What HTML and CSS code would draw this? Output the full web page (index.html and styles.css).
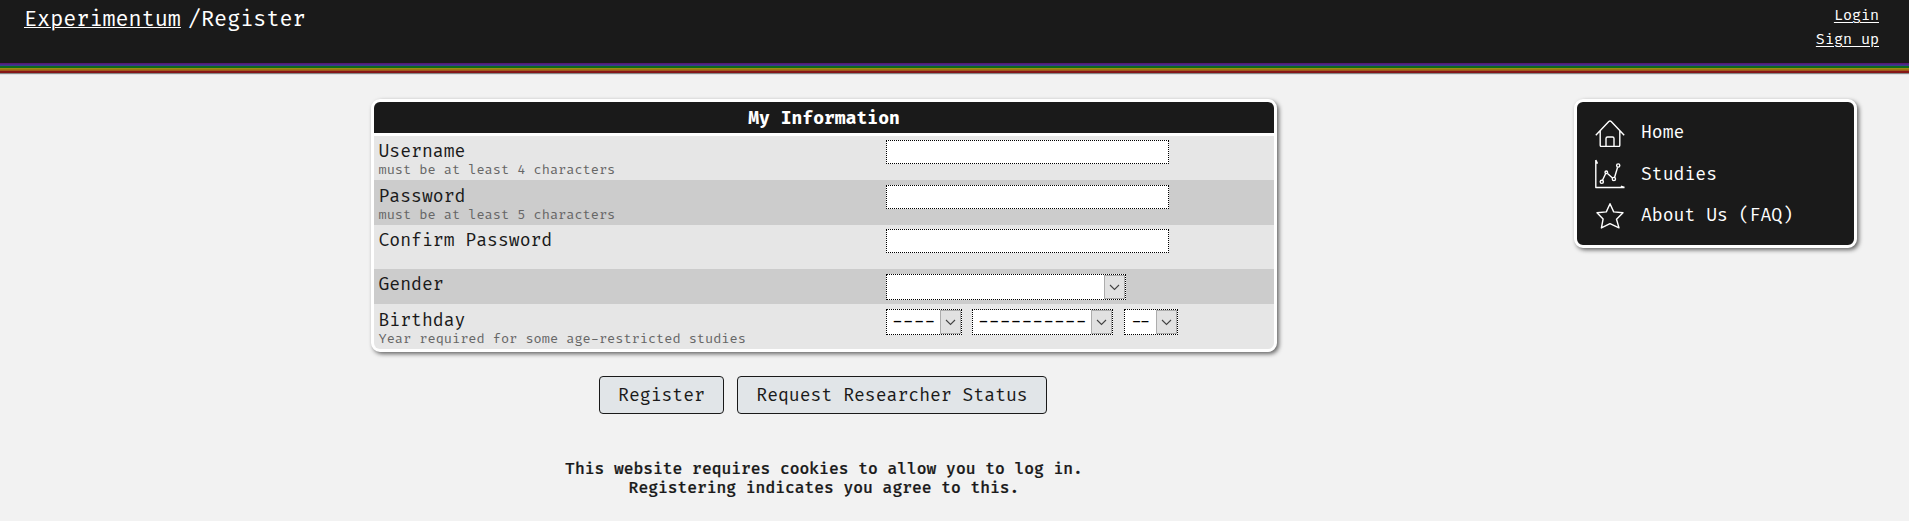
FILE: index.html
```
<!DOCTYPE html>
<html lang="en">
<head>
<meta charset="utf-8">
<title>Experimentum: Register</title>
<link rel="stylesheet" href="styles.css">
</head>
<body>
<header class="header">
  <div class="crumbs"><a class="link">Experimentum</a><span>/Register</span></div>
  <nav class="account"><a class="link">Login</a><a class="link">Sign up</a></nav>
</header>
<div class="rainbow"></div>
<div class="page">
  <main class="content">
    <section class="card">
      <h1 class="card-title">My Information</h1>
      <div class="row">
        <div class="label">Username<small class="hint">must be at least 4 characters</small></div>
        <div class="field"><span class="input"></span></div>
      </div>
      <div class="row row-alt row-tall">
        <div class="label">Password<small class="hint">must be at least 5 characters</small></div>
        <div class="field"><span class="input"></span></div>
      </div>
      <div class="row">
        <div class="label">Confirm Password</div>
        <div class="field"><span class="input"></span></div>
      </div>
      <div class="row row-alt row-short">
        <div class="label">Gender</div>
        <div class="field"><span class="select gender"><span class="value"></span><span class="arrow"><svg width="11" height="7" viewBox="0 0 11 7"><path d="M1 1l4.500 4.500L10 1"/></svg></span></span></div>
      </div>
      <div class="row row-tall">
        <div class="label">Birthday<small class="hint">Year required for some age-restricted studies</small></div>
        <div class="field">
          <span class="select year"><span class="value">----</span><span class="arrow"><svg width="11" height="7" viewBox="0 0 11 7"><path d="M1 1l4.500 4.500L10 1"/></svg></span></span>
          <span class="select month"><span class="value">----------</span><span class="arrow"><svg width="11" height="7" viewBox="0 0 11 7"><path d="M1 1l4.500 4.500L10 1"/></svg></span></span>
          <span class="select day"><span class="value">--</span><span class="arrow"><svg width="11" height="7" viewBox="0 0 11 7"><path d="M1 1l4.500 4.500L10 1"/></svg></span></span>
        </div>
      </div>
    </section>
    <div class="actions">
      <button class="button register">Register</button>
      <button class="button researcher">Request Researcher Status</button>
    </div>
    <p class="notice">This website requires cookies to allow you to log in.<br>Registering indicates you agree to this.</p>
  </main>
  <nav class="menu">
    <a class="menu-item"><svg class="icon" viewBox="0 0 30 30"><path transform="translate(0 2)" d="M.8 16.200L13.800 2.600q1.200-1.200 2.400 0L29.200 16.200M5.200 12v14.300q0 1.200 1.200 1.200h17.200q1.200 0 1.200-1.200V12M11 27.500v-8q0-1.500 1.500-1.500h5q1.500 0 1.500 1.500v8"/></svg><span class="menu-text">Home</span></a>
    <a class="menu-item"><svg class="icon" viewBox="0 0 30 30"><path d="M.8 1v27.500H29.500M.8 1l1.500 3H.8M29.500 28.500l-3-1.200v1.200M7.500 21.300l3.300-7M12.500 14.500l5 4.500M19.600 18.300l3-10"/><circle cx="6.800" cy="22.800" r="1.600"/><circle cx="11.300" cy="13.300" r="1.300"/><circle cx="18.900" cy="20" r="1.600"/><circle cx="23.200" cy="6.500" r="1.600"/></svg><span class="menu-text studies">Studies</span></a>
    <a class="menu-item"><svg class="icon" viewBox="0 0 30 30"><path d="M15 3.700l3.700 8.200 9.300.8-6.500 6.600 2.500 8.600-9-4.300-8.600 4.300 1.700-8.900L2 12.700l9.300-.8z"/></svg><span class="menu-text">About Us (FAQ)</span></a>
  </nav>
</div>
</body>
</html>
```

FILE: styles.css
```
* { box-sizing: border-box; }
body {
  margin: 0;
  background: #f2f2f2;
  color: #1a1a1a;
  font-family: "Fira Code", "Fira Mono", "DejaVu Sans Mono", monospace;
  font-size: 17.650px;
  line-height: 20px;
}
.header {
  display: flex;
  justify-content: space-between;
  height: 63px;
  padding: 3px 30px 0 24px;
  background: #1a1a1a;
  color: #fff;
}
.link { text-decoration: underline; text-decoration-thickness: 1px; text-underline-offset: 2px; }
.crumbs { display: flex; gap: 7px; padding-top: 1px; font-size: 21.250px; line-height: 32px; }
.crumbs .link { text-underline-offset: 1px; }
.account {
  display: flex;
  flex-direction: column;
  align-items: flex-end;
  padding-top: 1px;
  font-size: 14.670px;
  line-height: 24px;
}
.rainbow {
  height: 10px;
  background: linear-gradient(#551a75 0 1px, #4b2a83 1px 2px, #34408f 2px 3px, #0f6b1a 3px 5px, #a08a14 5px 6px, #9c7412 6px 7px, #a0561a 7px 8px, #861717 8px 10px);
  box-shadow: 0 1px 1px #888;
}
.page { display: flex; justify-content: space-between; align-items: flex-start; padding: 26px 52px 0 371px; }
.content { width: 906px; }
.card, .menu { border: 3px solid #fff; border-radius: 9px; box-shadow: 2px 2px 4px #666; }
.card { overflow: hidden; background: #fff; }
.card-title {
  margin: 0 0 3px;
  padding-top: 7px;
  height: 31px;
  background: #1a1a1a;
  color: #fff;
  font-size: 17.600px;
  line-height: 20px;
  text-align: center;
}
.row { display: flex; height: 44px; background: #e6e6e6; }
.row-alt { background: #ccc; }
.row-tall { height: 45px; }
.row-short { height: 35px; }
.label { width: 512px; padding: 6px 0 0 4.500px; }
.row-tall .label { padding-top: 7px; }
.row-short .label { padding-top: 6px; }
.hint { display: block; color: #666; font-size: 13.270px; line-height: 16px; }
.row-tall .hint { margin-top: -0.500px; }
.field { display: flex; align-items: flex-start; padding-top: 4px; }
.row-tall .field, .row-short .field { padding-top: 5px; }
.input, .select { border: 1px dotted #000; background: #fff; }
.input { width: 283px; height: 24px; }
.select { display: flex; justify-content: space-between; height: 26px; }
.value { padding: 2px 0 0 5px; color: #000; }
.year .value, .month .value { font-variant-ligatures: none; font-feature-settings: "calt" 0; }
.arrow { display: flex; align-items: center; justify-content: center; width: 21px; background: #e1e1e1; border: 1px solid #adadad; }
.arrow path { fill: none; stroke: #444; stroke-width: 1.100; }
.gender { width: 240px; }
.year { width: 76px; margin-right: 10px; }
.month { width: 141px; margin-right: 11px; }
.day { width: 54px; }
.actions { display: flex; justify-content: center; gap: 13px; margin-top: 24px; padding-right: 2px; }
.button {
  height: 38px;
  padding: 1px 0 0;
  border: 1px solid #1a1a1a;
  border-radius: 4px;
  background: #e1e5e8;
  color: #1a1a1a;
  font: inherit;
}
.register { width: 125px; }
.researcher { width: 310px; }
.notice { margin: 46px 0 0; text-align: center; font-size: 15.880px; line-height: 19px; font-weight: 500; -webkit-text-stroke: 0.200px #1a1a1a; }
.menu { display: flex; flex-direction: column; gap: 11.500px; width: 283px; height: 149px; padding: 15px 15px 0 18px; background: #1a1a1a; color: #fff; }
.menu-item { display: flex; align-items: center; gap: 16px; height: 30px; }
.icon { width: 30px; height: 30px; fill: none; stroke: #fff; stroke-width: 1.400; stroke-linejoin: round; }
.menu-text { padding-top: 1px; }
.studies { padding-top: 2px; }
```
